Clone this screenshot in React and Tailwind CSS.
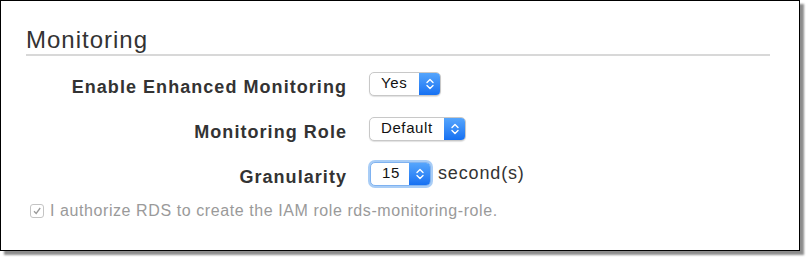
// =====================================
// SELECT BOX
// =====================================

function Stepper() {
  return (
    <svg width="10" height="14" viewBox="0 0 10 14" fill="none">
      <path d="M2 5.5 L5 2.5 L8 5.5" stroke="white" strokeWidth="1.4" strokeLinecap="round" strokeLinejoin="round" />
      <path d="M2 8.5 L5 11.5 L8 8.5" stroke="white" strokeWidth="1.4" strokeLinecap="round" strokeLinejoin="round" />
    </svg>
  );
}

function Select({ value, width, focused }) {
  return (
    <div
      className={
        focused
          ? "flex h-[24px] rounded-[5px] border border-[#7fb2f0] ring-2 ring-[#a9cdf6] bg-white overflow-hidden"
          : "flex h-[24px] rounded-[5px] border border-[#c8c8c8] bg-white overflow-hidden shadow-[0_1px_1px_rgba(0,0,0,0.12)]"
      }
      style={{ width }}
    >
      <div className="flex-1 flex items-center pl-[11px] text-[15px] tracking-[0.6px] text-[#111]">
        {value}
      </div>
      <div className="w-[21px] flex items-center justify-center bg-gradient-to-b from-[#55a5fc] to-[#1570f2]">
        <Stepper />
      </div>
    </div>
  );
}

function Row({ label, children }) {
  return (
    <div className="flex items-center">
      <div className="w-[346px] pt-[8px] text-right text-[18px] leading-[27px] tracking-[1.05px] font-bold text-[#333]">
        {label}
      </div>
      <div className="ml-[22px] flex items-center">
        {children}
      </div>
    </div>
  );
}

export default function App() {
  return (
    <div className="w-[810px] h-[262px] bg-white font-['Liberation_Sans',Arial,sans-serif]">

      {/* FRAME */}

      <div className="w-[800px] h-[251px] border border-black bg-white shadow-[4px_4px_2px_rgba(0,0,0,0.45)] pt-[24px] pl-[25px] pr-[29px]">

        <h1 className="text-[24px] text-[#333] leading-[29px] tracking-[1px]">
          Monitoring
        </h1>

        <div className="h-[2px] bg-[#d8d8d8]" />

        <div className="mt-[10px] flex flex-col gap-[10px] -ml-[25px]">

          <Row label="Enable Enhanced Monitoring">
            <Select value="Yes" width={72} />
          </Row>

          <Row label="Monitoring Role">
            <Select value="Default" width={97} />
          </Row>

          <Row label="Granularity">
            <div className="ml-[1px]">
              <Select value="15" width={61} focused />
            </div>
            <span className="ml-[7px] text-[18px] tracking-[0.85px] text-[#333]">second(s)</span>
          </Row>

        </div>

        {/* CHECKBOX */}

        <div className="mt-[8px] flex items-center text-[16px] leading-[24px] tracking-[0.58px] text-[#9a9a9a]">
          <div className="ml-[4px] w-[14px] h-[14px] rounded-[3px] border border-[#c4c4c4] flex items-center justify-center">
            <svg width="10" height="10" viewBox="0 0 10 10">
              <path d="M2 5.2 L4.2 7.5 L8.2 2" stroke="#9a9a9a" strokeWidth="1.3" fill="none" />
            </svg>
          </div>
          <span className="ml-[6px]">
            I authorize RDS to create the IAM role rds-monitoring-role.
          </span>
        </div>

      </div>

    </div>
  );
}
